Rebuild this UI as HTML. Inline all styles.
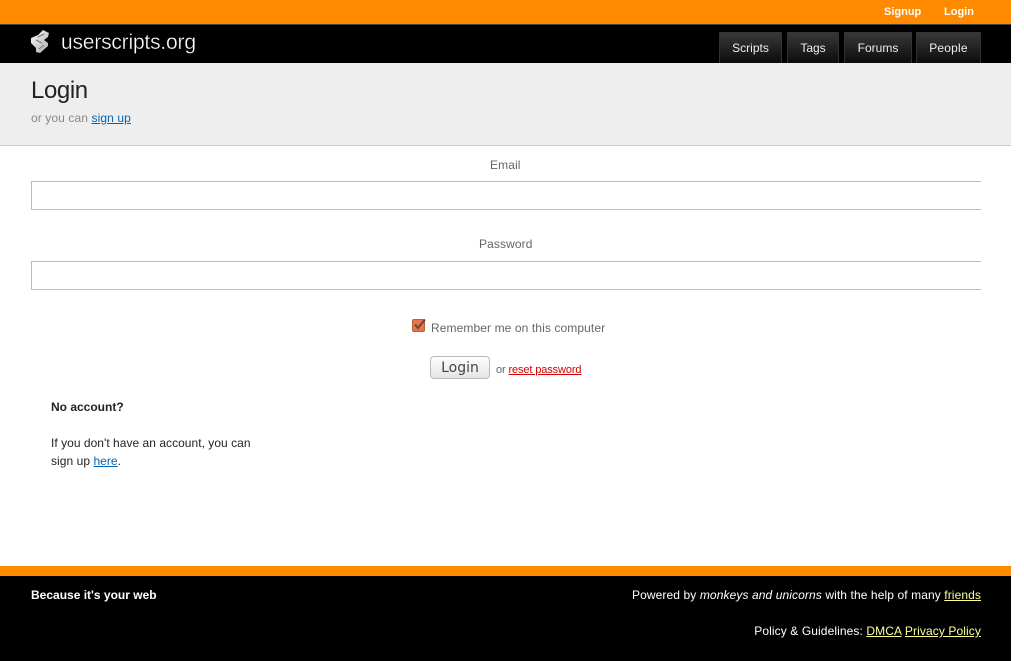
<!DOCTYPE html>
<html><head><meta charset="utf-8"><style>
html,body{margin:0;padding:0;background:#fff;width:1024px;height:661px;overflow:hidden;font-family:"Liberation Sans",sans-serif;font-size:12px;color:#222}
.a{position:absolute;white-space:nowrap;line-height:14px}
.tab{position:absolute;top:32px;height:31px;box-sizing:border-box;border:1px solid #333;border-bottom:0;background:linear-gradient(#383838,#0c0c0c);color:#eee;text-align:center;line-height:30px;font-size:12px}
a{color:#0066b8;text-decoration:underline}
.f a{color:#ffff99}
</style></head><body>
<div style="position:absolute;left:0;top:0;width:1011px;height:24px;background:#ff8a00"></div>
<div style="position:absolute;left:0;top:24px;width:1011px;height:1px;background:#444"></div>
<div style="position:absolute;left:0;top:25px;width:1011px;height:38px;background:#000"></div>
<div class="a" style="left:884px;top:5px;font-size:11px;font-weight:bold;color:#fff">Signup</div>
<div class="a" style="left:944px;top:5px;font-size:11px;font-weight:bold;color:#fff">Login</div>
<svg style="position:absolute;left:28px;top:28px" width="26" height="28" viewBox="0 0 26 28"><defs><linearGradient id="g" x1="0" y1="0" x2="1" y2="1"><stop offset="0" stop-color="#fafafa"/><stop offset="1" stop-color="#aaa"/></linearGradient></defs><path d="M15 2 L21 5 L20 9 L16 12 L20 15 L20 18 L12 25 L8 24 L8 20 L3 15 L3 10 L10 7 Z" fill="url(#g)"/><path d="M10 9 L16 6 M8 12 L14 15 M11 21 L16 17" stroke="#777" stroke-width="1.1" fill="none"/></svg>
<svg style="position:absolute;left:60px;top:25px" width="140" height="36"><text x="1" y="24" font-family="Liberation Sans" font-size="21" fill="#fff" stroke="#000" stroke-width=".35" textLength="135" lengthAdjust="spacing">userscripts.org</text></svg>
<div class="tab" style="left:719px;width:63px">Scripts</div>
<div class="tab" style="left:787px;width:52px">Tags</div>
<div class="tab" style="left:844px;width:68px">Forums</div>
<div class="tab" style="left:916px;width:65px;letter-spacing:.2px">People</div>
<div style="position:absolute;left:0;top:63px;width:1011px;height:82px;background:#eee"></div>
<div style="position:absolute;left:0;top:145px;width:1011px;height:1px;background:#ccc"></div>
<div class="a" style="left:31px;top:77px;font-size:24px;line-height:28px;letter-spacing:-.4px;color:#222">Login</div>
<div class="a" style="left:31px;top:111px;color:#888;letter-spacing:.1px">or you can <a href="#">sign up</a></div>
<div class="a" style="left:490px;top:158px;color:#666;letter-spacing:.1px">Email</div>
<div style="position:absolute;left:31px;top:181px;width:950px;height:29px;box-sizing:border-box;border:1px solid #bbb;border-right:0"></div>
<div class="a" style="left:479px;top:237px;color:#666;letter-spacing:.1px">Password</div>
<div style="position:absolute;left:31px;top:261px;width:950px;height:29px;box-sizing:border-box;border:1px solid #bbb;border-right:0"></div>
<svg style="position:absolute;left:411px;top:317px" width="16" height="16" viewBox="0 0 16 16"><rect x="1.5" y="2.5" width="12" height="12" rx="1.5" fill="#e8754a" stroke="#b5603e"/><path d="M4 7.5 L7 11 L14 2.5" stroke="#6b4636" stroke-width="2" fill="none"/></svg>
<div class="a" style="left:431px;top:321px;color:#666;letter-spacing:.1px">Remember me on this computer</div>
<div style="position:absolute;left:430px;top:356px;width:60px;height:23px;box-sizing:border-box;border:1px solid #bbb;border-radius:4px;background:linear-gradient(#fff,#e4e4e4);text-align:center;line-height:22px;color:#444;font-family:'DejaVu Sans','Liberation Sans',sans-serif;font-size:14px">Login</div>
<div class="a" style="left:496px;top:363px;font-size:11px;color:#666;letter-spacing:-.12px">or <a href="#" style="color:#d40000">reset password</a></div>
<div class="a" style="left:51px;top:400px;font-weight:bold;color:#222">No account?</div>
<div class="a" style="left:51px;top:436px;color:#222;letter-spacing:.03px">If you don't have an account, you can</div>
<div class="a" style="left:51px;top:454px;color:#222;letter-spacing:.05px">sign up <a href="#">here</a>.</div>
<div style="position:absolute;left:0;top:566px;width:1011px;height:10px;background:#ff8a00"></div>
<div style="position:absolute;left:0;top:576px;width:1011px;height:85px;background:#000"></div>
<div class="a" style="left:31px;top:588px;font-weight:bold;color:#fff">Because it's your web</div>
<div class="a f" style="right:43px;top:588px;color:#fff;letter-spacing:.1px">Powered by <i>monkeys and unicorns</i> with the help of many <a href="#">friends</a></div>
<div class="a f" style="right:43px;top:624px;color:#fff;letter-spacing:.1px">Policy &amp; Guidelines: <a href="#">DMCA</a> <a href="#">Privacy Policy</a></div>
</body></html>
